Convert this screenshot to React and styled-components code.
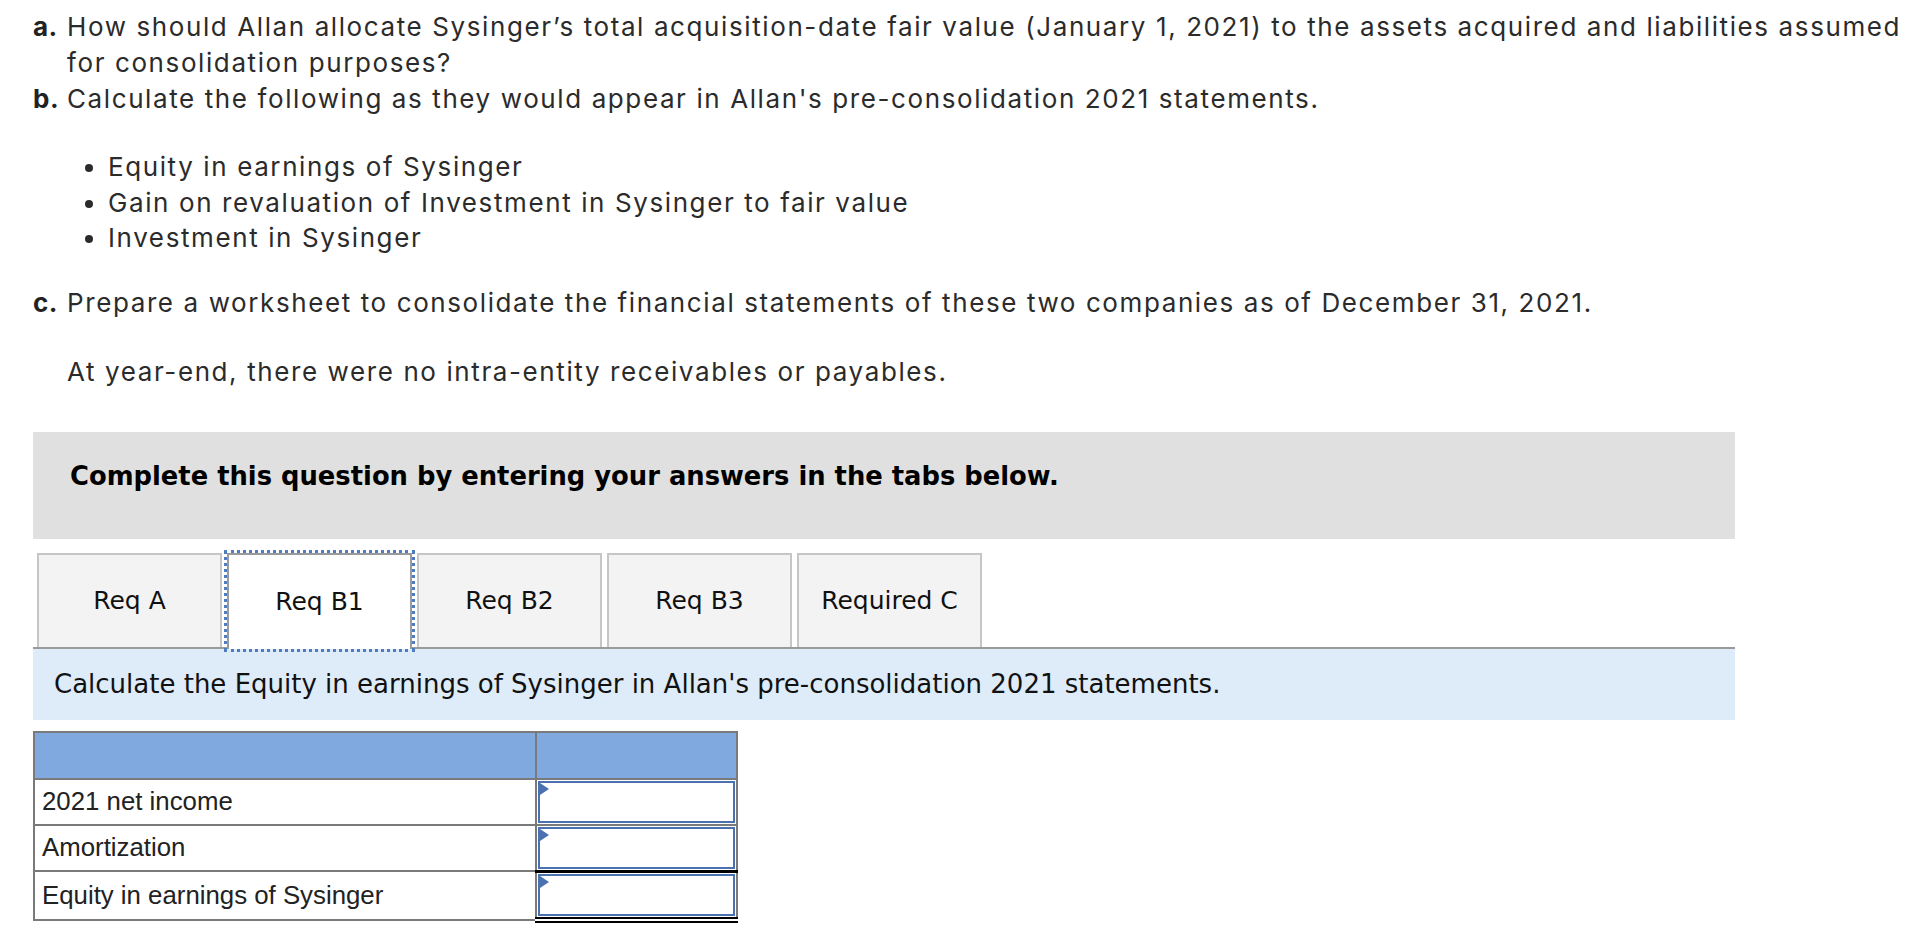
import React from 'react'
import styled, { createGlobalStyle } from 'styled-components'

const GlobalStyle = createGlobalStyle`
    html, body {
        margin: 0;
        padding: 0;
        background: #ffffff;
    }
    body {
        font-family: "Inter", "Lato", sans-serif;
        color: #2b2b2b;
    }
`

const tabs = ['Req A', 'Req B1', 'Req B2', 'Req B3', 'Required C']

const rows = [
    { label: '2021 net income', line: 'none' },
    { label: 'Amortization', line: 'single' },
    { label: 'Equity in earnings of Sysinger', line: 'double' },
]

function App() {
    return (
        <Page>
            <GlobalStyle />
            <Intro>
                <Item>
                    <Letter>a.</Letter>
                    <span>How should Allan allocate Sysinger’s total acquisition-date fair value (January 1, 2021) to the assets acquired and liabilities assumed for consolidation purposes?</span>
                </Item>
                <Item>
                    <Letter>b.</Letter>
                    <span>Calculate the following as they would appear in Allan's pre-consolidation 2021 statements.</span>
                </Item>
                <Bullets>
                    <li>Equity in earnings of Sysinger</li>
                    <li>Gain on revaluation of Investment in Sysinger to fair value</li>
                    <li>Investment in Sysinger</li>
                </Bullets>
                <Item $top={29}>
                    <Letter>c.</Letter>
                    <span>Prepare a worksheet to consolidate the financial statements of these two companies as of December 31, 2021.</span>
                </Item>
                <Note>At year-end, there were no intra-entity receivables or payables.</Note>
            </Intro>

            <Work>
                <Banner>Complete this question by entering your answers in the tabs below.</Banner>

                <TabBar>
                    {tabs.map((t) => (
                        <Tab key={t} $active={t === 'Req B1'}>{t}</Tab>
                    ))}
                </TabBar>

                <Instruction>Calculate the Equity in earnings of Sysinger in Allan's pre-consolidation 2021 statements.</Instruction>

                <Sheet>
                    <colgroup>
                        <col style={{ width: 502 }} />
                        <col style={{ width: 201 }} />
                    </colgroup>
                    <thead>
                        <tr>
                            <HeadCell></HeadCell>
                            <HeadCell></HeadCell>
                        </tr>
                    </thead>
                    <tbody>
                        {rows.map((r) => (
                            <tr key={r.label}>
                                <LabelCell>{r.label}</LabelCell>
                                <InputCell $line={r.line}>
                                    <Marker />
                                    <Entry type="text" aria-label={r.label} />
                                </InputCell>
                            </tr>
                        ))}
                    </tbody>
                </Sheet>
            </Work>
        </Page>
    )
}

export default App

const Page = styled.div`
    padding: 9px 0 0 33px;
`

const Intro = styled.div`
    width: 1890px;
    font-size: 26px;
    letter-spacing: 1.6px;
    line-height: 36px;
`

const Item = styled.div`
    display: grid;
    grid-template-columns: 34px 1fr;
    margin-top: ${(p) => (p.$top ? p.$top + 'px' : '0')};
`

const Letter = styled.b`
    font-weight: 700;
    letter-spacing: 0.5px;
    color: #222;
`

const Bullets = styled.ul`
    margin: 32px 0 0 0;
    padding: 0 0 0 75px;
    line-height: 35.5px;
`

const Note = styled.div`
    margin-top: 33px;
    padding-left: 34px;
`

const Work = styled.div`
    width: 1702px;
    font-family: "DejaVu Sans", Verdana, sans-serif;
    color: #111;
`

const Banner = styled.div`
    margin-top: 42px;
    height: 107px;
    box-sizing: border-box;
    padding: 29px 0 0 37px;
    background: #e0e0e0;
    font-weight: 700;
    font-size: 25.8px;
    line-height: 30px;
    color: #000;
`

const TabBar = styled.div`
    margin-top: 14px;
    display: flex;
    align-items: flex-end;
    gap: 5px;
    padding-left: 4px;
    border-bottom: 2px solid #9a9a9a;
    height: 96px;
    box-sizing: border-box;
`

const Tab = styled.div`
    width: 185px;
    box-sizing: border-box;
    display: flex;
    align-items: center;
    justify-content: center;
    border: 2px solid ${(p) => (p.$active ? '#9a9a9a' : '#c6c6c6')};
    border-bottom: none;
    background: ${(p) => (p.$active ? '#ffffff' : '#f3f3f3')};
    font-size: 25px;
    outline: ${(p) => (p.$active ? '3px dotted #4d7cc0' : 'none')};
    outline-offset: 0;
    position: relative;
    z-index: 1;
    height: ${(p) => (p.$active ? '96px' : '94px')};
    margin-bottom: ${(p) => (p.$active ? '-2px' : '0')};
`

const Instruction = styled.div`
    height: 71px;
    box-sizing: border-box;
    padding-left: 21px;
    display: flex;
    align-items: center;
    background: #deebf8;
    font-size: 26px;
`

const Sheet = styled.table`
    margin-top: 11px;
    width: 703px;
    table-layout: fixed;
    border-collapse: collapse;
    font-family: "Liberation Sans", Arial, sans-serif;
    font-size: 25.8px;
    color: #222;
`

const HeadCell = styled.th`
    height: 45px;
    padding: 0;
    background: #80aadf;
    border: 2px solid #7a7a7a;
`

const LabelCell = styled.td`
    height: 44px;
    padding: 0 0 0 7px;
    border: 2px solid #7a7a7a;
    white-space: nowrap;
`

const InputCell = styled.td`
    position: relative;
    padding: 1px;
    border: 2px solid #7a7a7a;
    border-bottom: ${(p) =>
        p.$line === 'double' ? '6px double #000' : p.$line === 'single' ? '3px solid #000' : '2px solid #7a7a7a'};
    vertical-align: top;
`

const Entry = styled.input`
    display: block;
    width: 100%;
    height: 42px;
    box-sizing: border-box;
    border: 2px solid #4a72b0;
    background: #fff;
    margin: 0;
    padding: 0 6px;
    font: inherit;
    outline: none;
`

const Marker = styled.span`
    position: absolute;
    left: 3px;
    top: 3px;
    width: 0;
    height: 0;
    border-top: 6px solid transparent;
    border-bottom: 6px solid transparent;
    border-left: 9px solid #4a72b0;
`
